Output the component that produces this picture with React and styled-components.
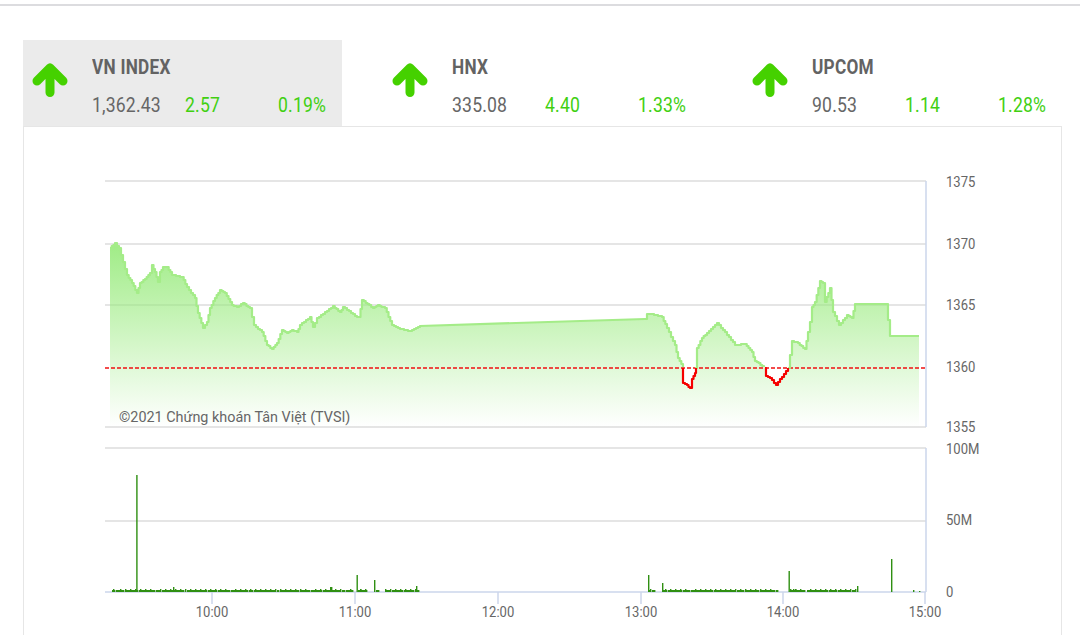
import React from "react";
import styled, { createGlobalStyle } from "styled-components";

const GlobalStyle = createGlobalStyle`
  html, body {
    margin: 0;
    padding: 0;
    background: #fff;
    font-family: Roboto, "Liberation Sans", sans-serif;
    overflow: hidden;
  }
`;

const indexes = [
  { name: "VN INDEX", price: "1,362.43", change: "2.57", percent: "0.19%", active: true },
  { name: "HNX", price: "335.08", change: "4.40", percent: "1.33%" },
  { name: "UPCOM", price: "90.53", change: "1.14", percent: "1.28%" },
];

// price line, split where it drops under the reference price
const greenParts = [
  "110,248 115,243 119,248 123,262 127,275 132,283 137,293 140,283 145,279 150,273 152,265 155,272 158,282 160,272 163,267 167,267 172,275 182,277 187,287 195,298 198,313 203,328 207,322 210,308 215,298 220,290 225,293 232,305 237,307 243,303 250,308 254,325 262,332 267,345 272,349 277,343 282,330 287,333 292,330 297,332 300,325 310,317 313,327 317,318 325,312 333,306 340,312 343,307 357,317 359,317 362,300 373,308 378,305 385,308 392,325 400,329 410,331 420,326 645,319 647,314 652,314 662,317 667,328 675,345 678,358 683,367",
  "695,368 697,348 702,338 707,333 717,323 725,332 735,345 745,344 752,352 755,361 764,367",
  "788,368 792,341 798,343 805,349 808,332 810,322 812,307 815,302 820,281 823,283 825,302 830,288 833,312 839,325 847,315 852,318 855,304 886,304 890,336 919,336",
];
const redParts = [
  "683,368 683,383 687,385 690,388 692,379 695,373 696,368",
  "765,368 766,376 770,378 776,385 788,368",
];
const areaOutline = "110,248 115,243 119,248 123,262 127,275 132,283 137,293 140,283 145,279 150,273 152,265 155,272 158,282 160,272 163,267 167,267 172,275 182,277 187,287 195,298 198,313 203,328 207,322 210,308 215,298 220,290 225,293 232,305 237,307 243,303 250,308 254,325 262,332 267,345 272,349 277,343 282,330 287,333 292,330 297,332 300,325 310,317 313,327 317,318 325,312 333,306 340,312 343,307 357,317 359,317 362,300 373,308 378,305 385,308 392,325 400,329 410,331 420,326 645,319 647,314 652,314 662,317 667,328 675,345 678,358 683,367 683,383 687,385 690,388 692,379 695,373 697,348 702,338 707,333 717,323 725,332 735,345 745,344 752,352 755,361 764,367 766,376 770,378 776,385 788,368 792,341 798,343 805,349 808,332 810,322 812,307 815,302 820,281 823,283 825,302 830,288 833,312 839,325 847,315 852,318 855,304 886,304 890,336 919,336";

const stepped = (points) => {
  const pts = points.split(" ").map((p) => p.split(",").map(Number));
  const out = [];
  for (let i = 0; i < pts.length - 1; i++) {
    const [x1, y1] = pts[i];
    const [x2, y2] = pts[i + 1];
    if (x2 - x1 > 20) {
      out.push(`${x1},${y1}`);
      continue;
    }
    const count = Math.max(1, Math.round((x2 - x1) / 2));
    for (let s = 0; s < count; s++) {
      const y = Math.round(y1 + ((y2 - y1) * s) / count);
      out.push(`${x1 + ((x2 - x1) * s) / count},${y}`);
      out.push(`${x1 + ((x2 - x1) * (s + 1)) / count},${y}`);
    }
  }
  out.push(pts[pts.length - 1].join(","));
  return out.join(" ");
};

const priceTicks = [
  { y: 182, label: "1375" },
  { y: 244, label: "1370" },
  { y: 305, label: "1365" },
  { y: 367, label: "1360" },
  { y: 427, label: "1355" },
];
const volumeTicks = [
  { y: 449, label: "100M" },
  { y: 520, label: "50M" },
  { y: 592, label: "0" },
];
const timeTicks = [
  { x: 212, label: "10:00" },
  { x: 355, label: "11:00" },
  { x: 498, label: "12:00" },
  { x: 641, label: "13:00" },
  { x: 783, label: "14:00" },
  { x: 925, label: "15:00" },
];

const spikes = [
  [113, 589], [136.2, 475], [173, 587], [202, 590], [330, 587], [331, 587],
  [356.5, 575], [360, 589], [374, 580], [416, 586], [648, 575], [662, 583], [788.5, 571],
  [793, 589], [795, 589], [857, 586], [891, 559], [913, 590], [919, 591],
];

const buildVolumes = () => {
  const bars = [...spikes];
  const ranges = [[112, 352], [358, 366], [376, 378], [385, 418], [649, 654], [663, 777], [790, 855]];
  ranges.forEach(([from, to]) => {
    for (let x = from; x <= to; x++) {
      const gap = (x * 7) % 23 === 0 || x % 31 === 0;
      if (!gap) bars.push([x, x % 5 === 0 ? 589 : 590]);
    }
  });
  return bars;
};

const UpArrow = () => (
  <ArrowIcon viewBox="0 0 36 34">
    <path
      d="M18 29.5 V5 M5 18 L18 5 L31 18"
      fill="none"
      stroke="#45d100"
      strokeWidth="9"
      strokeLinecap="round"
      strokeLinejoin="round"
    />
  </ArrowIcon>
);

const IndexTab = ({ item }) => (
  <Tab $active={item.active}>
    <UpArrow />
    <TabBody>
      <TabTitle>{item.name}</TabTitle>
      <TabValues>
        <Price>{item.price}</Price>
        <Change>{item.change}</Change>
        <Change>{item.percent}</Change>
      </TabValues>
    </TabBody>
  </Tab>
);

const MarketChart = () => (
  <ChartSvg viewBox="24 127 1037 508">
    <defs>
      <linearGradient id="areaFill" x1="0" y1="225" x2="0" y2="427" gradientUnits="userSpaceOnUse">
        <stop offset="0" stopColor="#96ea7a" stopOpacity="1" />
        <stop offset="1" stopColor="#96ea7a" stopOpacity="0" />
      </linearGradient>
    </defs>

    {[181, 244, 305, 427, 448, 521].map((y) => (
      <GridLine key={y} x1="105" x2="926" y1={y} y2={y} />
    ))}
    <polygon points={`${stepped(areaOutline)} 919,427 110,427`} fill="url(#areaFill)" />
    <AxisLine d="M926 181 V427 M926 448 V592 M105 592 H926" />
    {timeTicks.map((t) => (
      <AxisLine key={t.x} d={`M${t.x} 592 V604`} />
    ))}
    <RefLine x1="105" x2="926" y1="368" y2="368" />

    {greenParts.map((points) => (
      <PriceLine key={points} points={stepped(points)} stroke="#a4ec88" />
    ))}
    {redParts.map((points) => (
      <PriceLine key={points} points={stepped(points)} stroke="#f50000" />
    ))}

    {buildVolumes().map(([x, top], i) => (
      <VolumeBar key={i} x={x} y={top} width="1.4" height={592 - top} />
    ))}

    {priceTicks.map((t) => (
      <AxisLabel key={t.y} x="946" y={t.y + 5}>{t.label}</AxisLabel>
    ))}
    {volumeTicks.map((t) => (
      <AxisLabel key={t.y} x="946" y={t.y + 5}>{t.label}</AxisLabel>
    ))}
    {timeTicks.map((t) => (
      <TimeLabel key={t.x} x={t.x} y="617" textAnchor="middle">{t.label}</TimeLabel>
    ))}
    <Credit x="119" y="422">©2021 Chứng khoán Tân Việt (TVSI)</Credit>
  </ChartSvg>
);

export default function App() {
  return (
    <>
      <GlobalStyle />
      <Page>
        <TabRow>
          {indexes.map((item) => (
            <IndexTab key={item.name} item={item} />
          ))}
        </TabRow>
        <Panel>
          <MarketChart />
        </Panel>
      </Page>
    </>
  );
}

const Page = styled.div`
  margin-top: 4px;
  height: 631px;
  box-sizing: border-box;
  border-top: 2px solid #dcdcdf;
  padding: 34px 18px 0 23px;
  overflow: hidden;
`;

const TabRow = styled.div`
  display: flex;
  gap: 41px;
`;

const Tab = styled.div`
  width: 319px;
  height: 86px;
  box-sizing: border-box;
  display: flex;
  align-items: flex-start;
  padding: 22px 0 0 9px;
  background: ${(p) => (p.$active ? "#ebebeb" : "transparent")};
`;

const ArrowIcon = styled.svg`
  width: 36px;
  height: 34px;
  flex: none;
  margin-right: 23.7px;
  margin-top: 1px;
`;

const TabBody = styled.div`
  flex: 1;
  margin-top: -7px;
`;

const TabTitle = styled.div`
  font-size: 20px;
  font-weight: 700;
  line-height: 24px;
  color: #636363;
  letter-spacing: 0.3px;
  transform: scaleX(0.86);
  transform-origin: left;
`;

const TabValues = styled.div`
  display: grid;
  grid-template-columns: 93px 93px 1fr;
  margin-top: 14px;
  font-size: 20px;
  line-height: 24px;
`;

const Price = styled.span`
  color: #666;
  letter-spacing: 0.2px;
  transform: scaleX(0.88);
  transform-origin: left;
`;

const Change = styled(Price)`
  color: #41d011;
`;

const Panel = styled.div`
  width: 1039px;
  height: 520px;
  box-sizing: border-box;
  border: 1px solid #e6e6e6;
`;

const ChartSvg = styled.svg`
  display: block;
  width: 1037px;
  height: 508px;
`;

const GridLine = styled.line`
  stroke: #dcdcdc;
  stroke-width: 1.5;
`;

const AxisLine = styled.path`
  fill: none;
  stroke: #ccd6eb;
  stroke-width: 1.5;
`;

const RefLine = styled.line`
  stroke: #f01010;
  stroke-width: 1.4;
  stroke-dasharray: 4 2;
`;

const PriceLine = styled.polyline`
  fill: none;
  stroke-width: 2.2;
  stroke-linejoin: round;
`;

const VolumeBar = styled.rect`
  fill: #2f8f12;
`;

const AxisLabel = styled.text`
  font-family: Roboto, "Liberation Sans", sans-serif;
  font-size: 15px;
  fill: #666;
  transform-box: fill-box;
  transform-origin: left;
  transform: scaleX(0.87);
`;

const TimeLabel = styled(AxisLabel)`
  transform-origin: center;
`;

const Credit = styled.text`
  font-family: Roboto, "Liberation Sans", sans-serif;
  font-size: 15px;
  fill: #666;
  transform-box: fill-box;
  transform-origin: left;
  transform: scaleX(0.96);
`;
